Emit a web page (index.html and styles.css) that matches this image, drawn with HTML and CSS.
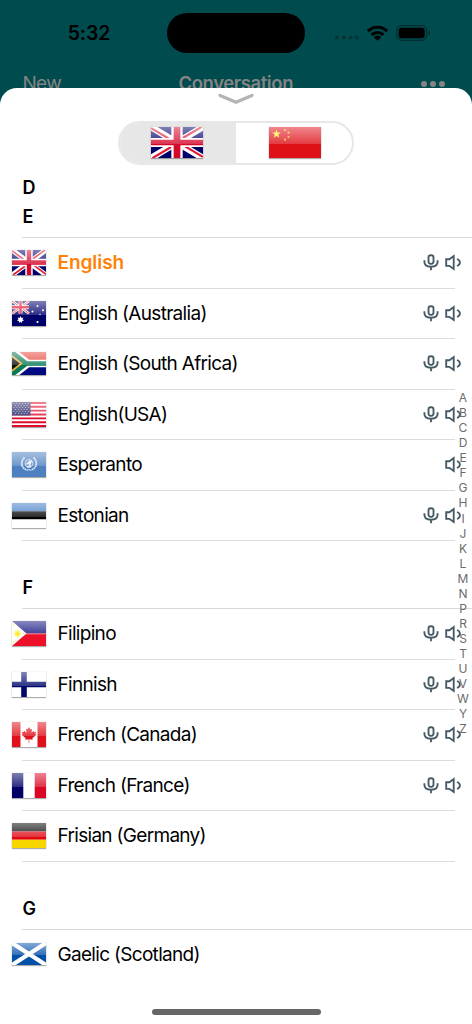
FILE: index.html
```html
<!DOCTYPE html>
<html lang="en">
<head>
<meta charset="utf-8">
<title>Conversation</title>
<link rel="stylesheet" href="styles.css">
</head>
<body>
<svg class="defs" width="0" height="0">
  <symbol id="uk" viewBox="0 0 34 25" preserveAspectRatio="none">
    <path fill="#00006b" d="M0 0h34v25H0z"/>
    <path stroke="#fff" stroke-width="5" d="M0 0l34 25M34 0L0 25"/>
    <path stroke="#e01b34" stroke-width="1.7" d="M0 .8l14 10.3M34 24.2L20 13.9M33 0L19 10.2M1 25l14-10.2"/>
    <path stroke="#fff" stroke-width="7.4" d="M17 0v25M0 12.5h34"/>
    <path stroke="#d5072c" stroke-width="4.4" d="M17 0v25M0 12.5h34"/>
  </symbol>
  <symbol id="cn" viewBox="0 0 52 31">
    <path fill="#de1018" d="M0 0h52v31H0z"/>
    <path fill="#ffec2c" d="M7.500 2.500l1.100 3.100h3.300l-2.600 2 1 3.200-2.800-1.900-2.800 1.900 1-3.200-2.600-2h3.300z"/>
    <g fill="#ffb52c"><circle cx="16" cy="3" r="1.100"/><circle cx="19.500" cy="5.700" r="1.100"/><circle cx="19.500" cy="10" r="1.100"/><circle cx="16" cy="12.700" r="1.100"/></g>
  </symbol>
  <symbol id="au" viewBox="0 0 34 25">
    <path fill="#00006b" d="M0 0h34v25H0z"/>
    <path stroke="#fff" stroke-width="2.600" d="M0 0l17 12.500M17 0L0 12.500"/>
    <path stroke="#e01b34" stroke-width="1" d="M0 0l17 12.500M17 0L0 12.500"/>
    <path stroke="#fff" stroke-width="4" d="M8.500 0v12.500M0 6.300h17"/>
    <path stroke="#e01030" stroke-width="2.400" d="M8.500 0v12.500M0 6.300h17"/>
    <g fill="#fff"><path d="M8.500 15l.9 1.900 2-.5-.9 1.900 1.600 1.300-2 .5v2l-1.600-1.300-1.600 1.300v-2l-2-.5 1.600-1.300-.9-1.900 2 .5z"/><circle cx="25.500" cy="5" r="1"/><circle cx="20.500" cy="10.500" r="1"/><circle cx="31" cy="9.300" r="1"/><circle cx="28" cy="13.500" r=".7"/><circle cx="25.500" cy="21" r="1.100"/></g>
  </symbol>
  <symbol id="za" viewBox="0 0 34 23">
    <path fill="#e8453a" d="M0 0h34v11.500H0z"/><path fill="#000a80" d="M0 11.500h34V23H0z"/>
    <path fill="none" stroke="#fff" stroke-width="7.400" d="M0-1l16 12.500L0 24M16 11.500h18"/>
    <path fill="#111" d="M0 3l11 8.500L0 20z"/>
    <path fill="none" stroke="#f2b53c" stroke-width="2" d="M0 4l9.500 7.500L0 19"/>
    <path fill="none" stroke="#087a55" stroke-width="4.500" d="M-1-.5l15.500 12L-1 23.500M14 11.500h20"/>
  </symbol>
  <symbol id="us" viewBox="0 0 34 25">
    <path fill="#fff" d="M0 0h34v25H0z"/>
    <path stroke="#e00b2b" stroke-width="1.920" d="M0 .96h34M0 4.800h34M0 8.650h34M0 12.500h34M0 16.350h34M0 20.200h34M0 24.040h34"/>
    <path fill="#262668" d="M0 0h18.500v13.500H0z"/>
    <path stroke="#c2c2de" stroke-width=".8" stroke-dasharray=".9 2" d="M1.500 1.500h16M3 3.500h14M1.500 5.500h16M3 7.500h14M1.500 9.500h16M3 11.500h14"/>
  </symbol>
  <symbol id="un" viewBox="0 0 34 25">
    <path fill="#4d80c1" d="M0 0h34v25H0z"/>
    <g fill="none" stroke="#e4edf7"><path stroke-width="1.800" stroke-dasharray="1.700 .5" d="M12.500 5.500c-4.500 4-3.500 10.500 2.500 12.500M21.500 5.500c4.500 4 3.500 10.500-2.500 12.500"/><path stroke-width=".9" d="M15 18.500l2-1 2 1"/><ellipse cx="17" cy="11.500" rx="3.800" ry="4" stroke-width=".8"/><path stroke-width="1.500" d="M14.500 12.500l3-3v4l2-5M15 15l4-1"/></g>
  </symbol>
  <symbol id="ee" viewBox="0 0 34 25"><path fill="#fff" d="M0 0h34v25H0z"/><path fill="#3c78c4" d="M0 0h34v8.300H0z"/><path d="M0 8.300h34v8H0z"/></symbol>
  <symbol id="ph" viewBox="0 0 34 25">
    <path fill="#10107e" d="M0 0h34v12.500H0z"/><path fill="#ec1029" d="M0 12.500h34V25H0z"/><path fill="#fff" d="M0 0l14.500 12.500L0 25z"/>
    <circle cx="5.500" cy="12.500" r="2.300" fill="#ffe800"/><path stroke="#ffe800" stroke-width=".9" d="M5.500 8.500v8M1.500 12.500h8M2.700 9.700l5.600 5.600M8.300 9.700l-5.600 5.600"/><circle cx="1.600" cy="4" r=".8" fill="#ffe800"/><circle cx="1.600" cy="21" r=".8" fill="#ffe800"/><circle cx="12" cy="12.500" r=".8" fill="#ffe800"/>
  </symbol>
  <symbol id="fi" viewBox="0 0 34 25"><path fill="#fff" d="M0 0h34v25H0z"/><path stroke="#00096b" stroke-width="5.600" d="M12 0v25M0 12.500h34"/></symbol>
  <symbol id="ca" viewBox="0 0 34 25"><path fill="#fff" d="M0 0h34v25H0z"/><path fill="#df111a" d="M0 0h8.500v25H0zM25.500 0H34v25h-8.500zM17 5l1.500 2.500 1.500-.7-.5 4 2.100-2 .5 1.200 2-.2-.7 2.200 1 .7-4.100 3.600.4 1.500-3.400-.5v3.500h-.6v-3.500l-3.400.5.4-1.500-4.100-3.600 1-.7-.7-2.200 2 .2.500-1.200 2.100 2-.5-4 1.500.7z"/></symbol>
  <symbol id="fr" viewBox="0 0 34 25"><path fill="#fff" d="M0 0h34v25H0z"/><path fill="#000067" d="M0 0h11.300v25H0z"/><path fill="#da0724" d="M22.700 0H34v25H22.700z"/></symbol>
  <symbol id="de" viewBox="0 0 34 25"><path d="M0 0h34v8.500H0z"/><path fill="#df0713" d="M0 8.500h34v8.200H0z"/><path fill="#f9d500" d="M0 16.700h34V25H0z"/></symbol>
  <symbol id="sc" viewBox="0 0 34 22"><path fill="#0450a8" d="M0 0h34v22H0z"/><path stroke="#fff" stroke-width="4.200" d="M0 0l34 22M34 0L0 22"/></symbol>
  <symbol id="mic" viewBox="0 0 16 17"><g fill="none" stroke="#455a64" stroke-width="1.850"><rect x="5.500" y="1.200" width="5" height="8.600" rx="2.200"/><path d="M1.400 6.200v1.500c0 3.100 2.500 5 6.600 5s6.600-1.900 6.600-5V6.200M8 12.700v3.500"/></g></symbol>
  <symbol id="spk" viewBox="0 0 17 17"><g fill="none" stroke="#455a64" stroke-width="1.850"><path d="M1.200 5.200h3.200l4.300-3.200v13l-4.300-3.200H1.200z"/><path d="M12 5c1.600.6 2.900 1.800 2.900 3.500S13.600 11.400 12 12"/></g></symbol>
</svg>

<div class="screen">
  <header class="status">
    <div class="clock">5:32</div>
    <div class="island"></div>
    <div class="indicators">
      <svg class="cell" viewBox="0 0 24 5"><g fill="#033437"><circle cx="2" cy="2.500" r="2"/><circle cx="8.700" cy="2.500" r="2"/><circle cx="15.400" cy="2.500" r="2"/><circle cx="22" cy="2.500" r="2"/></g></svg>
      <svg class="wifi" viewBox="0 0 21 16"><g fill="none" stroke="#000" stroke-width="3"><path d="M1 6.200c5.300-5.200 13.700-5.200 19 0M4.600 9.900c3.300-3.200 8.500-3.200 11.800 0"/></g><path d="M6.900 12.200c2-1.900 5.200-1.900 7.200 0L10.500 15.800z"/></svg>
      <svg class="battery" viewBox="0 0 35 16"><rect x=".7" y=".7" width="30" height="14.600" rx="4.800" fill="none" stroke="#022f31" stroke-width="1.300"/><rect x="2.700" y="2.700" width="26" height="10.600" rx="3"/><path fill="#022f31" d="M32.500 5.500c2.300.8 2.300 4.200 0 5z"/></svg>
    </div>
  </header>
  <nav class="navbar">
    <span class="new">New</span>
    <span class="title">Conversation</span>
    <span class="more"><i></i><i></i><i></i></span>
  </nav>

  <main class="sheet">
    <svg class="grabber" viewBox="0 0 38 12"><path fill="none" stroke="#b4b4b4" stroke-width="3.400" stroke-linecap="round" stroke-linejoin="round" d="M3 2.500l16 6.700 16-6.700"/></svg>
    <div class="segments">
      <div class="segment selected"><span class="flag large"><svg><use href="#uk"/></svg></span></div>
      <div class="segment"><span class="flag large"><svg><use href="#cn"/></svg></span></div>
    </div>
    <h2 class="letter first">D</h2>
    <h2 class="letter second">E</h2>
    <ul class="list">
      <li class="row current"><span class="flag"><svg><use href="#uk"/></svg></span><span class="name">English</span><svg class="mic"><use href="#mic"/></svg><svg class="spk"><use href="#spk"/></svg></li>
      <li class="row"><span class="flag"><svg><use href="#au"/></svg></span><span class="name">English (Australia)</span><svg class="mic"><use href="#mic"/></svg><svg class="spk"><use href="#spk"/></svg></li>
      <li class="row"><span class="flag za"><svg><use href="#za"/></svg></span><span class="name">English (South Africa)</span><svg class="mic"><use href="#mic"/></svg><svg class="spk"><use href="#spk"/></svg></li>
      <li class="row"><span class="flag"><svg><use href="#us"/></svg></span><span class="name">English(USA)</span><svg class="mic"><use href="#mic"/></svg><svg class="spk"><use href="#spk"/></svg></li>
      <li class="row"><span class="flag"><svg><use href="#un"/></svg></span><span class="name">Esperanto</span><svg class="spk"><use href="#spk"/></svg></li>
      <li class="row"><span class="flag"><svg><use href="#ee"/></svg></span><span class="name">Estonian</span><svg class="mic"><use href="#mic"/></svg><svg class="spk"><use href="#spk"/></svg></li>
    </ul>
    <h2 class="letter">F</h2>
    <ul class="list">
      <li class="row"><span class="flag"><svg><use href="#ph"/></svg></span><span class="name">Filipino</span><svg class="mic"><use href="#mic"/></svg><svg class="spk"><use href="#spk"/></svg></li>
      <li class="row"><span class="flag"><svg><use href="#fi"/></svg></span><span class="name">Finnish</span><svg class="mic"><use href="#mic"/></svg><svg class="spk"><use href="#spk"/></svg></li>
      <li class="row"><span class="flag"><svg><use href="#ca"/></svg></span><span class="name">French (Canada)</span><svg class="mic"><use href="#mic"/></svg><svg class="spk"><use href="#spk"/></svg></li>
      <li class="row"><span class="flag"><svg><use href="#fr"/></svg></span><span class="name">French (France)</span><svg class="mic"><use href="#mic"/></svg><svg class="spk"><use href="#spk"/></svg></li>
      <li class="row"><span class="flag"><svg><use href="#de"/></svg></span><span class="name">Frisian (Germany)</span></li>
    </ul>
    <h2 class="letter">G</h2>
    <ul class="list">
      <li class="row last"><span class="flag sc"><svg><use href="#sc"/></svg></span><span class="name">Gaelic (Scotland)</span></li>
    </ul>
  </main>
  <div class="index"><span>A</span><span>B</span><span>C</span><span>D</span><span>E</span><span>F</span><span>G</span><span>H</span><span>I</span><span>J</span><span>K</span><span>L</span><span>M</span><span>N</span><span>P</span><span>R</span><span>S</span><span>T</span><span>U</span><span>V</span><span>W</span><span>Y</span><span>Z</span></div>
  <div class="home"></div>
</div>
</body>
</html>
```
FILE: styles.css
```css
* { box-sizing: border-box; }
body { margin: 0; font-family: Inter, "Liberation Sans", sans-serif; color: #000; }
.defs { position: absolute; }
.screen { position: relative; width: 472px; height: 1024px; overflow: hidden; background: #004b4d; }

.status { display: grid; grid-template-columns: 167px 138px 1fr; height: 65px; align-items: center; }
.clock { padding-left: 11px; text-align: center; font-size: 19.5px; font-weight: 600; letter-spacing: -.1px; }
.island { height: 40px; border-radius: 20px; background: #000; }
.indicators { display: flex; align-items: center; padding-left: 30px; }
.cell { width: 24px; height: 5px; margin-top: 9px; }
.wifi { width: 21px; height: 16px; margin-left: 8px; }
.battery { width: 35px; height: 16px; margin-left: 8px; }

.navbar { display: grid; grid-template-columns: 1fr auto 1fr; align-items: start; height: 23px; padding: 7px 27px 0 22.5px; color: #848484; font-size: 19px; line-height: 23px; }
.new { letter-spacing: -.7px; }
.title { padding-left: 4px; font-weight: 600; font-size: 18.5px; letter-spacing: -.4px; }
.more { display: flex; justify-content: flex-end; gap: 3px; padding-top: 8.500px; }
.more i { width: 6px; height: 6px; border-radius: 50%; background: #848484; }

.sheet { position: relative; display: flex; flex-direction: column; height: 936px; border-radius: 17px 17px 0 0; background: #fff; }
.grabber { width: 38px; height: 12px; margin: 5px auto 0; flex: none; }
.segments { display: grid; grid-template-columns: 1fr 1fr; flex: none; width: 236px; height: 44px; margin: 16px auto 0; border: 2px solid #e7e7e7; border-radius: 22px; overflow: hidden; }
.segment { display: flex; align-items: center; justify-content: center; padding: 0 0 1px 2px; }
.selected { padding: 0 2px 1px 0; background: #e7e7e7; }

.flag { position: relative; flex: none; width: 34px; height: 25px; box-shadow: 0 1px 1px rgba(0, 0, 0, .3), 0 0 1px rgba(0, 0, 0, .2); }
.flag svg { display: block; width: 100%; height: 100%; }
.flag::after { content: ""; position: absolute; inset: 0; background: linear-gradient(rgba(255, 255, 255, .5), rgba(255, 255, 255, .18) 55%, rgba(255, 255, 255, 0) 56%); }
.flag.large { width: 52px; height: 31px; }
.flag.za { height: 23px; }
.flag.sc { height: 22px; }

.letter { flex: none; margin: 0; height: 68px; padding: 35px 0 0 22.5px; background: linear-gradient(#d9d9d9, #d9d9d9) 22px 100% / 450px 1px no-repeat; font-size: 18px; font-weight: 600; line-height: 24px; }
.letter.first { height: 39px; padding-top: 11px; background: none; }
.letter.second { height: 34px; padding-top: 1px; }

.list { flex: none; margin: 0; padding: 0; list-style: none; }
.row { display: flex; align-items: center; height: 50.5px; padding: 0 10px 1.500px 12px; background: linear-gradient(#dcdcdc, #dcdcdc) 22px 100% / 433px 1px no-repeat; }
.row.last { background: none; }
.name { flex: 1; padding: 1px 0 0 11.500px; font-size: 19px; letter-spacing: -.69px; line-height: 24px; white-space: nowrap; }
.current .name { color: #ff8208; font-weight: 600; letter-spacing: -.05px; padding-top: 0; }
.mic { width: 16px; height: 17px; margin-right: 6px; }
.spk { width: 17px; height: 17px; }

.index { position: absolute; top: 390px; left: 453px; width: 20px; display: grid; grid-auto-rows: 15.07px; justify-items: center; align-items: center; color: #6b6b6b; font-size: 12px; line-height: 15px; }
.home { position: absolute; left: 151.5px; top: 1009px; width: 169px; height: 5.500px; border-radius: 3px; background: #666; }
```
